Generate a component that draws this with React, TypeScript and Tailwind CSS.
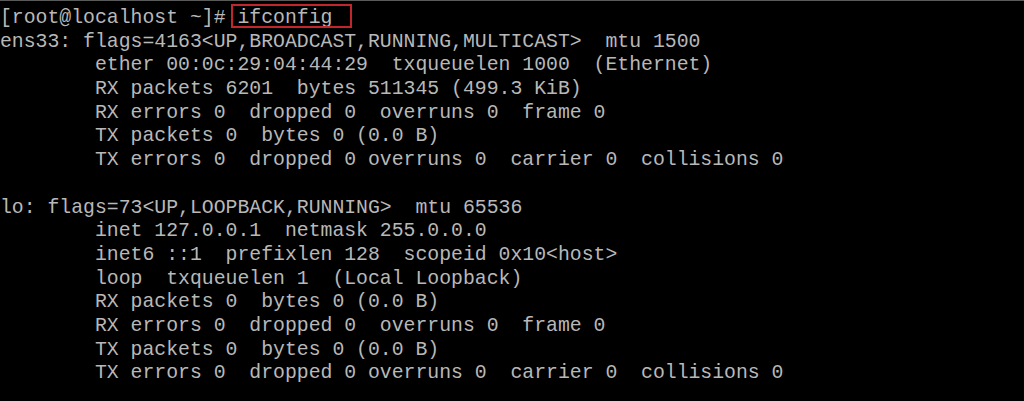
import React from "react";

const lines: string[] = [
  "ens33: flags=4163<UP,BROADCAST,RUNNING,MULTICAST>  mtu 1500",
  "        ether 00:0c:29:04:44:29  txqueuelen 1000  (Ethernet)",
  "        RX packets 6201  bytes 511345 (499.3 KiB)",
  "        RX errors 0  dropped 0  overruns 0  frame 0",
  "        TX packets 0  bytes 0 (0.0 B)",
  "        TX errors 0  dropped 0 overruns 0  carrier 0  collisions 0",
  "",
  "lo: flags=73<UP,LOOPBACK,RUNNING>  mtu 65536",
  "        inet 127.0.0.1  netmask 255.0.0.0",
  "        inet6 ::1  prefixlen 128  scopeid 0x10<host>",
  "        loop  txqueuelen 1  (Local Loopback)",
  "        RX packets 0  bytes 0 (0.0 B)",
  "        RX errors 0  dropped 0  overruns 0  frame 0",
  "        TX packets 0  bytes 0 (0.0 B)",
  "        TX errors 0  dropped 0 overruns 0  carrier 0  collisions 0",
];

export default function App() {
  return (
    <div className="w-[1024px] h-[401px] bg-black overflow-hidden border-t border-[#5a5a5a]">
      <pre className="m-0 pt-[6px] text-[#b8b8b8] text-[19.8px] leading-[23.7px] font-['Liberation_Mono',monospace] whitespace-pre">
        <div className="flex">
          <span>{"[root@localhost ~]# "}</span>
          <span className="relative">
            ifconfig
            <span className="absolute left-[-6px] right-[-20px] top-[-3px] bottom-[3px] border-2 border-[#c0262c] pointer-events-none" />
          </span>
        </div>
        {lines.map((l, i) => (
          <div key={i} className="h-[23.7px]">{l}</div>
        ))}
      </pre>
    </div>
  );
}
